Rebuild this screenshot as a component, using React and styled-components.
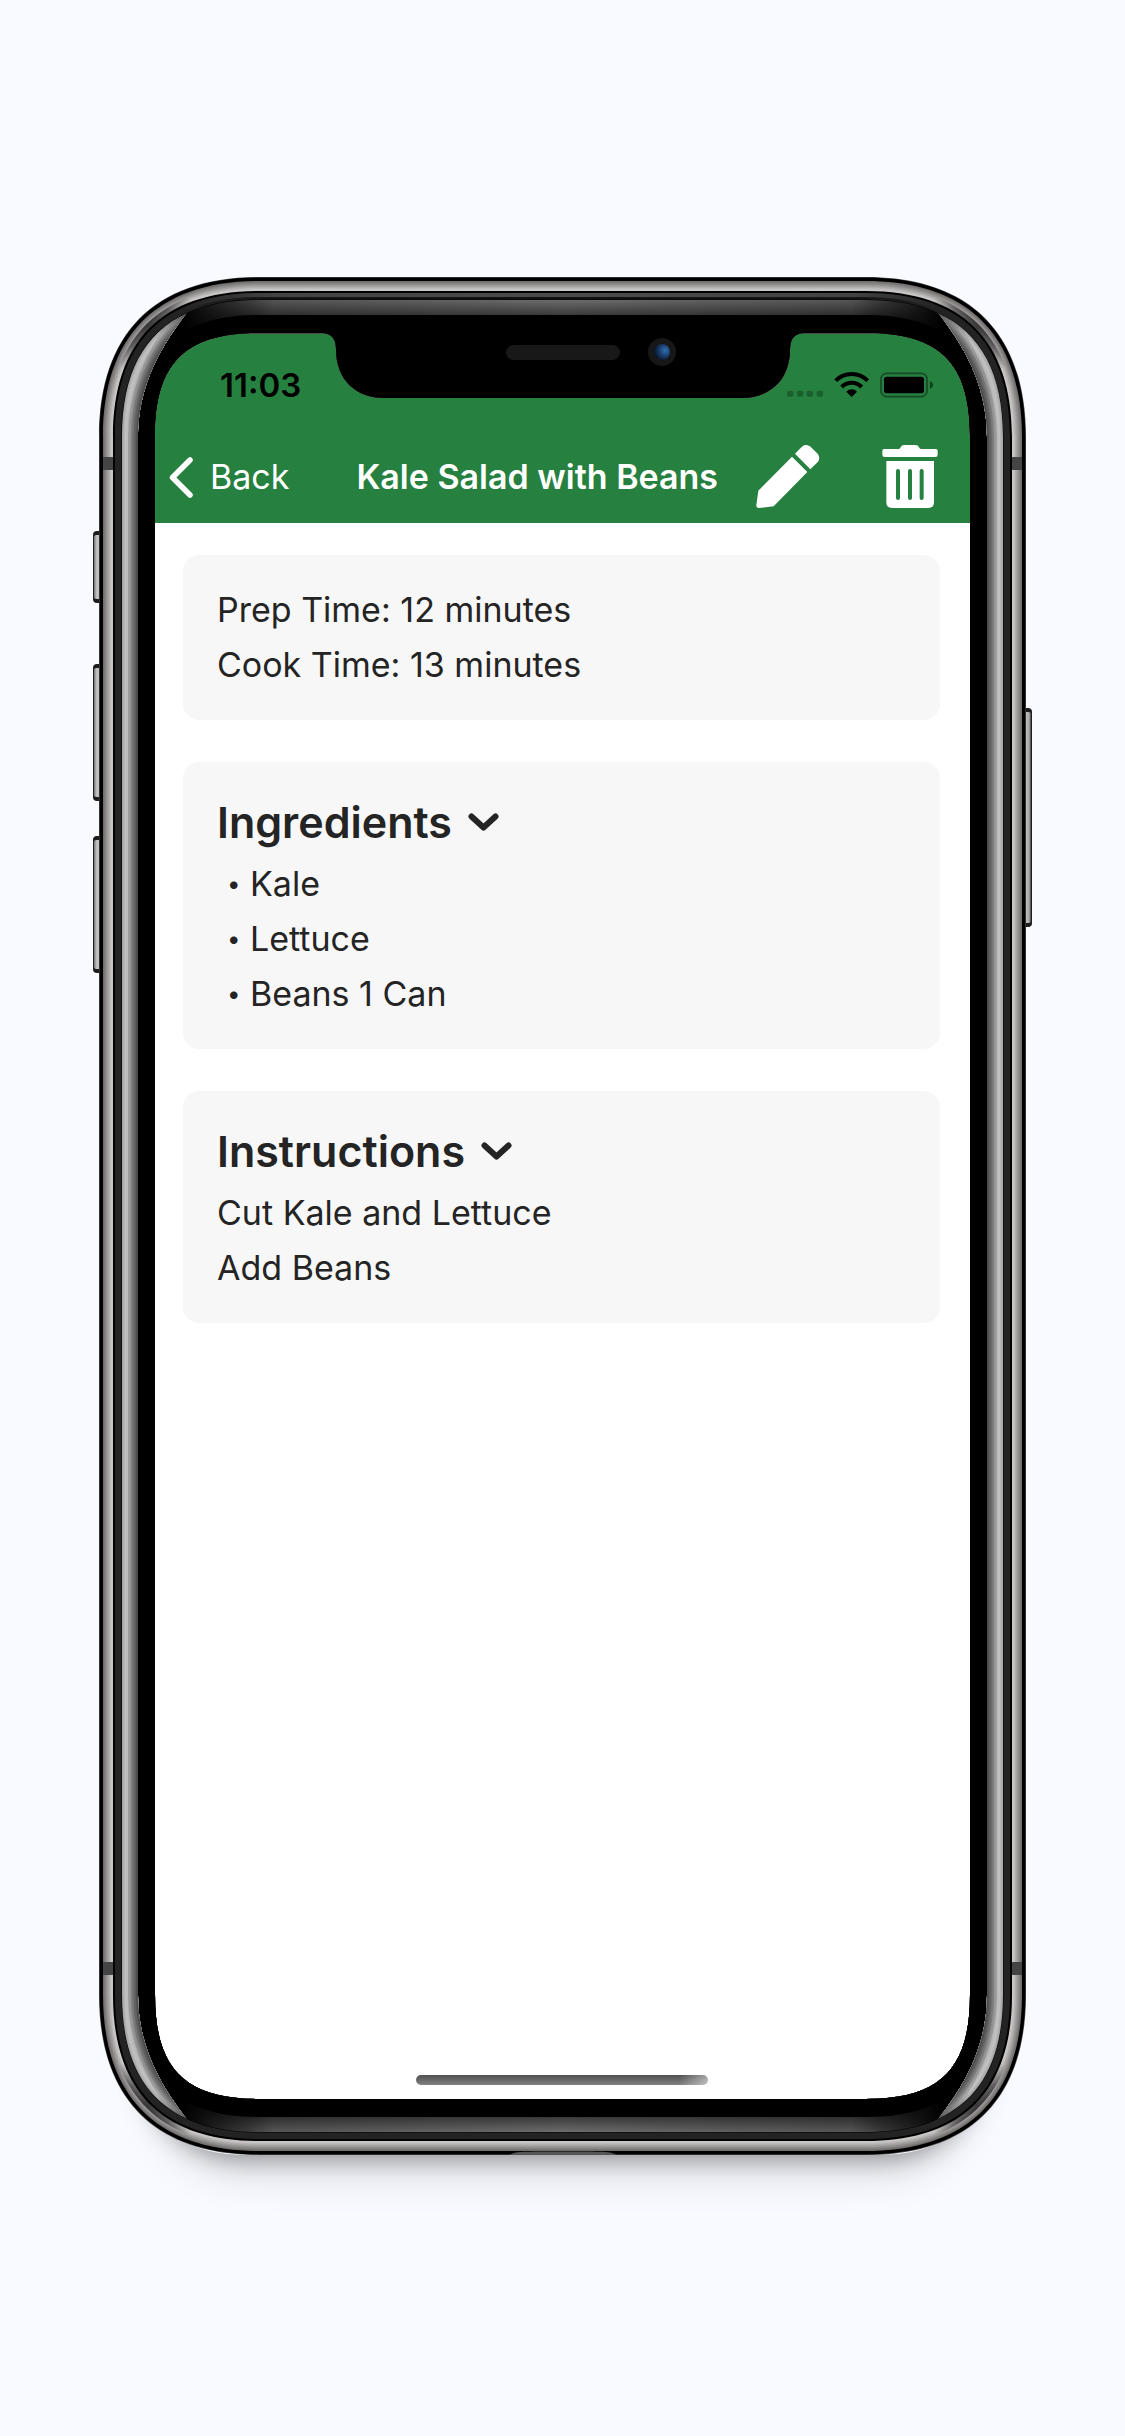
import React, { useState } from "react";
import styled, { createGlobalStyle } from "styled-components";

const GlobalStyle = createGlobalStyle`
  *, *::before, *::after { box-sizing: border-box; }
  body {
    margin: 0;
    background: #f9faff;
    color: #242424;
    font-family: Inter, "Liberation Sans", sans-serif;
  }
  h1, h2, p, ul { margin: 0; padding: 0; }
  button { border: 0; padding: 0; background: none; color: inherit; font: inherit; cursor: pointer; }
  svg { display: block; }
`;

const Stage = styled.main`
  min-height: 100vh;
  display: flex;
  align-items: center;
  justify-content: center;
  padding: 16px 16px 20px;
`;

const Phone = styled.div`
  position: relative;
  width: 100%;
  max-width: 927px;
  min-height: 1878px;
  display: flex;
  padding: 56px;
  border-radius: 144px;
  box-shadow:
    0 44px 24px -40px rgba(0, 0, 0, 0.36),
    0 72px 44px -56px rgba(20, 20, 30, 0.14);
`;

const Screen = styled.div`
  flex: 1;
  min-width: 0;
  display: flex;
  flex-direction: column;
  background: #fff;
  border-radius: 70px;
  overflow: hidden;
`;

const FrameArt = styled.svg`
  position: absolute;
  inset: 0;
  width: 100%;
  height: 100%;
  overflow: visible;
  pointer-events: none;
`;

const Header = styled.header`
  background: #26803f;
  color: #fff;
`;

const StatusBar = styled.div`
  height: 96px;
  padding: 8px 37px 0 65px;
  display: flex;
  align-items: center;
  justify-content: space-between;
  color: #000;
`;

const Time = styled.time`
  font-size: 33px;
  font-weight: 600;
  line-height: 40px;
`;

const NavBar = styled.nav`
  height: 94px;
  padding: 2px 32px 0 14px;
  display: flex;
  align-items: center;
`;

const BackButton = styled.button`
  display: flex;
  align-items: center;
  gap: 16px;
  margin-right: 67px;
  font-size: 34px;
  line-height: 44px;
`;

const Title = styled.h1`
  flex: 1;
  font-size: 34px;
  font-weight: 600;
  line-height: 44px;
  white-space: nowrap;
`;

const Actions = styled.div`
  display: flex;
  gap: 62px;
  padding-bottom: 2px;
`;

const Content = styled.div`
  flex: 1;
  display: flex;
  flex-direction: column;
  gap: 42px;
  padding: 32px 30px 32px 28px;
`;

const Card = styled.section`
  padding: 27px 34px 28px;
  border-radius: 16px;
  background: #f7f7f7;
`;

const Line = styled.p`
  font-size: 34px;
  line-height: 55px;
`;

const Heading = styled.h2`
  font-size: 43px;
  font-weight: 600;
  line-height: 67px;
`;

const Toggle = styled.button`
  display: flex;
  align-items: center;
  gap: 16px;
  svg { transform: ${(p) => (p.$open ? "none" : "rotate(-90deg)")}; }
`;

const List = styled.ul`
  list-style: none;
  padding-left: 10px;
`;

const Item = styled.li`
  display: flex;
  align-items: center;
  gap: 14px;
  font-size: 34px;
  line-height: 55px;
`;

const Bullet = styled.span`
  width: 9px;
  font-size: 24px;
  text-align: center;
`;

const HomeBar = styled.div`
  width: 292px;
  height: 10px;
  margin: 0 auto 14px 261px;
  border-radius: 5px;
  background:
    linear-gradient(100deg, transparent 90%, rgba(255, 255, 255, 0.5) 100%),
    linear-gradient(#505050, #828282);
`;

/* ---- device frame ---- */

const W = 927;
const H = 1878;

// Closed smooth-cornered outline, inset by d from the edge of the device.
function outline(d) {
  const e = 160;
  const h = d + 56 - 0.448 * d;
  const l = d, t = d, r = W - d, b = H - d;
  return [
    `M${l} ${e}C${l} ${h} ${h} ${t} ${e} ${t}`,
    `H${W - e}C${W - h} ${t} ${r} ${h} ${r} ${e}`,
    `V${H - e}C${r} ${H - h} ${W - h} ${b} ${W - e} ${b}`,
    `H${e}C${h} ${b} ${l} ${H - h} ${l} ${H - e}Z`,
  ].join("");
}

const screenHole =
  "M56 160C56 86 86 56 160 56H222Q237 56 237 72C237 103 257 121 286 121H642" +
  "C671 121 691 103 691 72Q691 56 706 56H767C841 56 871 86 871 160" +
  "V1718C871 1792 841 1822 767 1822H160C86 1822 56 1792 56 1718Z";

const grey = (v) => `rgb(${v},${v},${v})`;
const mix = (a, b, k) => Math.round(a + (b - a) * k);
const range = (n) => Array.from({ length: n }, (_, i) => i);

const crescents =
  "M39 160C39 118 54 78 88 36L0 0V1878L88 1842C54 1800 39 1760 39 1718Z" +
  "M888 160C888 118 873 78 839 36L927 0V1878L839 1842C873 1800 888 1760 888 1718Z";

// Everything between the outline at depth d and the screen opening.
function Layer({ d, fill }) {
  return <path d={outline(d) + screenHole} fillRule="evenodd" fill={fill} />;
}

function SideKey({ x, y, h, right }) {
  return (
    <g>
      <rect x={x} y={y} width="12" height={h} rx="4" fill="#1c1c1c" />
      <rect x={x + 1} y={y + 4} width="10" height={h - 8} rx="2" fill={right ? "url(#keyR)" : "url(#keyL)"} />
    </g>
  );
}

function DeviceFrame() {
  return (
    <FrameArt viewBox={`0 0 ${W} ${H}`} preserveAspectRatio="none" aria-hidden="true">
      <defs>
        <linearGradient id="keyL">
          <stop offset="0" stopColor="#777" />
          <stop offset="0.3" stopColor="#c8c8c8" />
          <stop offset="0.7" stopColor="#aaa" />
        </linearGradient>
        <linearGradient id="keyR">
          <stop offset="0.2" stopColor="#777" />
          <stop offset="0.5" stopColor="#bdbdbd" />
          <stop offset="0.8" stopColor="#aaa" />
          <stop offset="1" stopColor="#444" />
        </linearGradient>
        <linearGradient id="fadeMask" gradientUnits="userSpaceOnUse" x1="84" y1="0" x2="843" y2="0">
          <stop offset="0" stopColor="#000" />
          <stop offset="0.12" stopColor="#ccc" />
          <stop offset="0.5" stopColor="#fff" />
          <stop offset="0.88" stopColor="#ccc" />
          <stop offset="1" stopColor="#000" />
        </linearGradient>
        <mask id="endsFade" maskUnits="userSpaceOnUse" x="0" y="0" width={W} height={H}>
          <rect width={W} height={H} fill="url(#fadeMask)" />
        </mask>
        <clipPath id="sides"><path d={crescents} /></clipPath>
        <clipPath id="band"><path d={outline(23) + screenHole} clipRule="evenodd" /></clipPath>
        <clipPath id="top"><rect width={W} height="80" /></clipPath>
        <radialGradient id="cornerShade">
          <stop offset="0" stopColor="#000" stopOpacity="0.7" />
          <stop offset="0.5" stopColor="#000" stopOpacity="0.5" />
          <stop offset="1" stopColor="#000" stopOpacity="0" />
        </radialGradient>
        <clipPath id="rim"><path d={outline(9) + outline(15)} clipRule="evenodd" /></clipPath>
        <radialGradient id="lens" cx="0.7" cy="0.4" r="0.7">
          <stop offset="0" stopColor="#2e70ad" />
          <stop offset="0.5" stopColor="#1c3f70" />
          <stop offset="1" stopColor="#0a1328" />
        </radialGradient>
      </defs>

      <SideKey x={-6} y={254} h={72} />
      <SideKey x={-6} y={387} h={137} />
      <SideKey x={-6} y={559} h={137} />
      <SideKey x={921} y={431} h={219} right />

      <Layer d={0} fill="#555" />
      <Layer d={0.6} fill="#000" />
      {range(10).map((i) => {
        const v = mix(112, 200, Math.min(1, i / 8));
        return <Layer key={i} d={4 + i} fill={`rgb(${v},${v - 3},${v - 3})`} />;
      })}
      <g clipPath="url(#rim)">
        {[[50, 50], [877, 50], [50, 1828], [877, 1828]].map(([x, y]) => (
          <circle key={`${x}-${y}`} cx={x} cy={y} r="50" fill="url(#cornerShade)" />
        ))}
      </g>
      <Layer d={14} fill="#000" />
      <Layer d={16} fill="#232323" />
      <g clipPath="url(#top)" mask="url(#endsFade)">
        <Layer d={16} fill="#4c4c4c" />
        <Layer d={20} fill="#111" />
      </g>
      <Layer d={22.5} fill="#000" />
      <g mask="url(#endsFade)">
        {range(15).map((i) => (
          <Layer key={i} d={23 + i} fill={grey(mix(106, 60, i / 14))} />
        ))}
      </g>
      <Layer d={38} fill="#000" />
      <g clipPath="url(#sides)">
        {range(16).map((i) => (
          <Layer key={i} d={23 + i} fill={grey(i < 4 ? mix(165, 192, i / 3) : mix(192, 136, (i - 4) / 11))} />
        ))}
        <g clipPath="url(#band)" fill="none" stroke="#000" strokeOpacity="0.13">
          {[20, 14, 9, 4].map((w) => (
            <path key={w} d={crescents} strokeWidth={w} />
          ))}
        </g>
      </g>

      {[180, 1685].map((y) => (
        <g key={y} fill="#444">
          <rect x="4" y={y} width="10" height="13" />
          <rect x="913" y={y} width="10" height="13" />
        </g>
      ))}

      <path d="M150 56.500H222M706 56.500H777" fill="none" stroke="#4a4a4a" />
      <path d="M410 1878C418 1874 424 1875 436 1874.500H492C504 1875 510 1874 518 1878Z" fill="#555" />

      <rect x="407" y="68" width="114" height="15" rx="7.500" fill="#181818" />
      <circle cx="563" cy="75" r="14" fill="#171717" />
      <circle cx="563" cy="75" r="8" fill="url(#lens)" />
    </FrameArt>
  );
}

/* ---- icons ---- */

const StatusIcons = () => (
  <svg width="146" height="26" viewBox="381 334 438 78" aria-hidden="true">
    {[381, 411, 440, 470].map((x) => (
      <rect key={x} x={x} y="390" width="19" height="18" rx="5" fillOpacity="0.26" />
    ))}
    <g fill="none" stroke="#000" strokeWidth="12">
      <path d="M527 360A68 68 0 0 1 623 360" />
      <path d="M545 379A42 42 0 0 1 605 379" />
    </g>
    <path d="M575 409L559 393A22 22 0 0 1 591 393Z" />
    <rect x="663" y="338" width="138" height="70" rx="17" fill="none" stroke="#000" strokeOpacity="0.42" strokeWidth="5" />
    <rect x="672" y="348" width="120" height="50" rx="8" />
    <path d="M810 362Q819 365 819 373Q819 381 810 384Z" fillOpacity="0.5" />
  </svg>
);

const BackChevron = () => (
  <svg width="25" height="41" viewBox="0 0 25 41" aria-hidden="true">
    <path d="M21 3L3.500 20.500L21 38" fill="none" stroke="#fff" strokeWidth="5.500" strokeLinecap="round" strokeLinejoin="round" />
  </svg>
);

const Pencil = () => (
  <svg width="64" height="63" viewBox="288 555 192 189" fill="#fff" aria-hidden="true">
    <path d="M295 692L396 590L442 636L341 739L297 744Q288 744 289 735Z" />
    <path d="M405 581L425 561Q437 550 450 559L473 581Q482 593 474 605L451 628Z" />
  </svg>
);

const Trash = () => (
  <svg width="56" height="63" viewBox="666 555 168 189" fill="#fff" aria-hidden="true">
    <path d="M672 567H716Q720 567 722 562Q725 555 733 555H766Q774 555 777 562Q779 567 783 567H828Q833 567 833 573V584Q833 591 826 591H674Q667 591 667 584V573Q667 567 672 567Z" />
    <path
      fillRule="evenodd"
      d="M679 603H822V727Q822 744 805 744H696Q679 744 679 727ZM708 633V714A6 6 0 0 0 720 714V633A6 6 0 0 0 708 633ZM744 633V714A6 6 0 0 0 756 714V633A6 6 0 0 0 744 633ZM779 633V714A6 6 0 0 0 791 714V633A6 6 0 0 0 779 633Z"
    />
  </svg>
);

const Chevron = () => (
  <svg width="31" height="20" viewBox="0 0 31 20" aria-hidden="true">
    <path d="M3.500 3.500L15.500 14.500L27.500 3.500" fill="none" stroke="#242424" strokeWidth="6" strokeLinecap="round" strokeLinejoin="round" />
  </svg>
);

function Collapsible({ title, children }) {
  const [open, setOpen] = useState(true);
  return (
    <Card>
      <Heading>
        <Toggle type="button" $open={open} aria-expanded={open} onClick={() => setOpen(!open)}>
          {title}
          <Chevron />
        </Toggle>
      </Heading>
      {open && children}
    </Card>
  );
}

const ingredients = ["Kale", "Lettuce", "Beans 1 Can"];
const steps = ["Cut Kale and Lettuce", "Add Beans"];

export default function App() {
  return (
    <>
      <GlobalStyle />
      <Stage>
        <Phone>
          <Screen>
            <Header>
              <StatusBar>
                <Time>11:03</Time>
                <StatusIcons />
              </StatusBar>
              <NavBar>
                <BackButton type="button">
                  <BackChevron />
                  Back
                </BackButton>
                <Title>Kale Salad with Beans</Title>
                <Actions>
                  <button type="button" aria-label="Edit recipe"><Pencil /></button>
                  <button type="button" aria-label="Delete recipe"><Trash /></button>
                </Actions>
              </NavBar>
            </Header>
            <Content>
              <Card>
                <Line>Prep Time: 12 minutes</Line>
                <Line>Cook Time: 13 minutes</Line>
              </Card>
              <Collapsible title="Ingredients">
                <List>
                  {ingredients.map((name) => (
                    <Item key={name}>
                      <Bullet>•</Bullet>
                      {name}
                    </Item>
                  ))}
                </List>
              </Collapsible>
              <Collapsible title="Instructions">
                {steps.map((step) => (
                  <Line key={step}>{step}</Line>
                ))}
              </Collapsible>
            </Content>
            <HomeBar />
          </Screen>
          <DeviceFrame />
        </Phone>
      </Stage>
    </>
  );
}
